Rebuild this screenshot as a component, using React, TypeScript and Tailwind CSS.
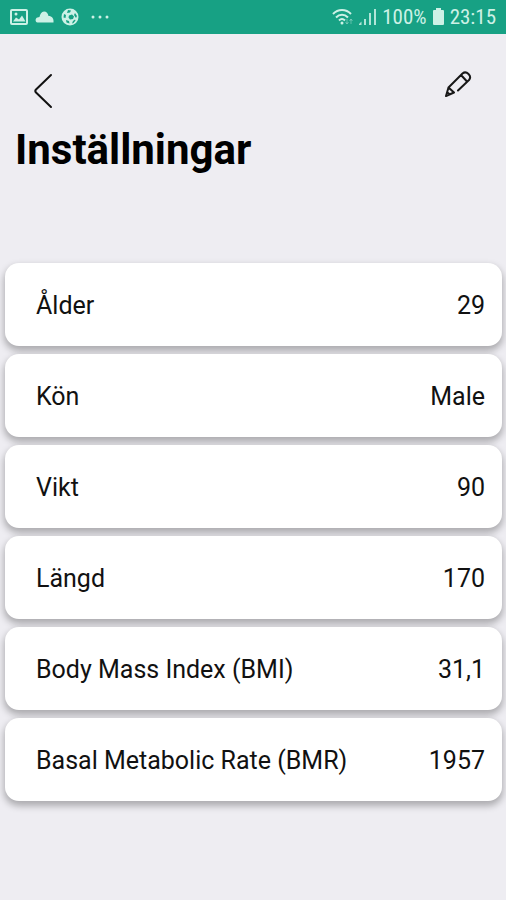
const settings = [
  { label: "Ålder", value: "29" },
  { label: "Kön", value: "Male" },
  { label: "Vikt", value: "90" },
  { label: "Längd", value: "170" },
  { label: "Body Mass Index (BMI)", value: "31,1" },
  { label: "Basal Metabolic Rate (BMR)", value: "1957" },
];

function StatusBar() {
  return (
    <div className="flex h-[34px] items-center justify-between bg-[#17a184] px-[10px] text-[#cdf1e6]">
      <div className="flex items-center gap-[7px]">
        <svg width="18" height="16" viewBox="0 0 18 16" aria-label="Picture">
          <rect x="1" y="1" width="16" height="14" rx="1" fill="none" stroke="currentColor" strokeWidth="2" />
          <path d="M3 12.500l3-4 3 2 3-4 3.500 6z" fill="currentColor" />
          <circle cx="6" cy="5" r="1.500" fill="currentColor" />
        </svg>
        <svg width="19" height="12" viewBox="0 0 19 12" aria-label="Cloud">
          <path d="M2.500 11.500C0 11.500 0 7 2.500 6.500L4.500 6C5 3 6.500 .5 9 .5c2.500 0 4 2 4.500 4.500C17 5 19 7.500 18.500 11.500z" fill="currentColor" />
        </svg>
        <svg width="18" height="18" viewBox="0 0 18 18" aria-label="Football">
          <circle cx="9" cy="9" r="8.500" fill="currentColor" />
          <path d="M8 7.500l3-1 2 2-1 2.500-3 .5-1.500-2zM3 6l2 1-.5 3L2.500 9.500zM7 2l3 .5-1 2-3 .5zM14 5l2 3-1 2-2-3zM12 13l2-1.500.5 1-2 2.500-1.500.5zM5 12l3 1 .5 2.500-3-1z" fill="#17a184" />
        </svg>
        <svg className="ml-1" width="20" height="4" viewBox="0 0 20 4" aria-label="More notifications">
          <circle cx="3" cy="2" r="1.500" fill="currentColor" />
          <circle cx="10" cy="2" r="1.500" fill="currentColor" />
          <circle cx="17" cy="2" r="1.500" fill="currentColor" />
        </svg>
      </div>
      <div className="flex items-center gap-[5px] text-[21px] leading-6">
        <svg width="22" height="18" viewBox="0 0 22 18" aria-label="Wi-Fi" fill="none" stroke="currentColor" strokeWidth="2">
          <path d="M1 6c5-5.300 13-5.300 18 0M4 9.500c3.500-3.600 8.500-3.600 12 0M7 12.500c2-2 4-2 6 0" />
          <circle cx="10" cy="15" r="1.500" fill="currentColor" stroke="none" />
          <path d="M15 11v5m-1.500-2l1.500 2 1.500-2M19 16v-5m-1.500 2l1.500-2 1.500 2" strokeWidth="1" opacity=".4" />
        </svg>
        <svg width="18" height="18" viewBox="0 0 18 18" aria-label="Signal" fill="currentColor">
          <path d="M0 17v-1l2.500-2.500V17zM5 17v-6h2v6zM10 17V5h2v12zM15 17V1h2v16z" opacity=".85" />
        </svg>
        <span className="font-['Roboto_Condensed',Roboto,sans-serif]">100%</span>
        <svg width="13" height="18" viewBox="0 0 13 18" aria-label="Battery">
          <path d="M4 0h5v2h2a1 1 0 0 1 1 1v13a1 1 0 0 1-1 1H2a1 1 0 0 1-1-1V3a1 1 0 0 1 1-1h2z" fill="currentColor" />
        </svg>
        <span className="font-['Roboto_Condensed',Roboto,sans-serif]">23:15</span>
      </div>
    </div>
  );
}

export default function App() {
  return (
    <div className="min-h-screen bg-[#eeedf2] font-[Roboto,sans-serif] text-[#111]">
      <StatusBar />
      <header className="pt-8 pr-4 pl-[15px]">
        <div className="flex items-start justify-between pr-4 pl-3">
          <button type="button" aria-label="Tillbaka" className="flex h-[50px] w-8 items-center justify-center">
            <svg width="24" height="36" viewBox="0 0 24 36" fill="none" stroke="#111" strokeWidth="2" strokeLinecap="round" strokeLinejoin="round">
              <path d="M20 2L5 16.500Q3.500 18 5 19.500L20 34" />
            </svg>
          </button>
          <button type="button" aria-label="Redigera" className="flex h-9 w-8 items-center justify-center">
            <svg width="28" height="28" viewBox="0 0 28 28" fill="none" stroke="#181818" strokeWidth="2" strokeLinecap="round" strokeLinejoin="round">
              <path d="M4.500 17.500L18.500 3.500Q21.500 1 24.500 4T25 10L14 20.500M10 22.500L2 26L4.500 17.500L10 22.500M17 5L23 11.500M3.500 22.500L6 24.500" />
            </svg>
          </button>
        </div>
        <h1 className="mt-[7px] text-[42px] leading-[54px] font-bold text-black">Inställningar</h1>
      </header>
      <dl className="mt-[86px] flex flex-col gap-2 pr-1 pl-[5px] text-[25px] leading-8">
        {settings.map((item) => (
          <div
            key={item.label}
            className="flex h-[83px] items-center justify-between rounded-[14px] bg-white pt-[3px] pr-[17px] pl-[31px] shadow-[0_4px_7px_1px_rgba(0,0,0,0.28)]"
          >
            <dt>{item.label}</dt>
            <dd>{item.value}</dd>
          </div>
        ))}
      </dl>
    </div>
  );
}
